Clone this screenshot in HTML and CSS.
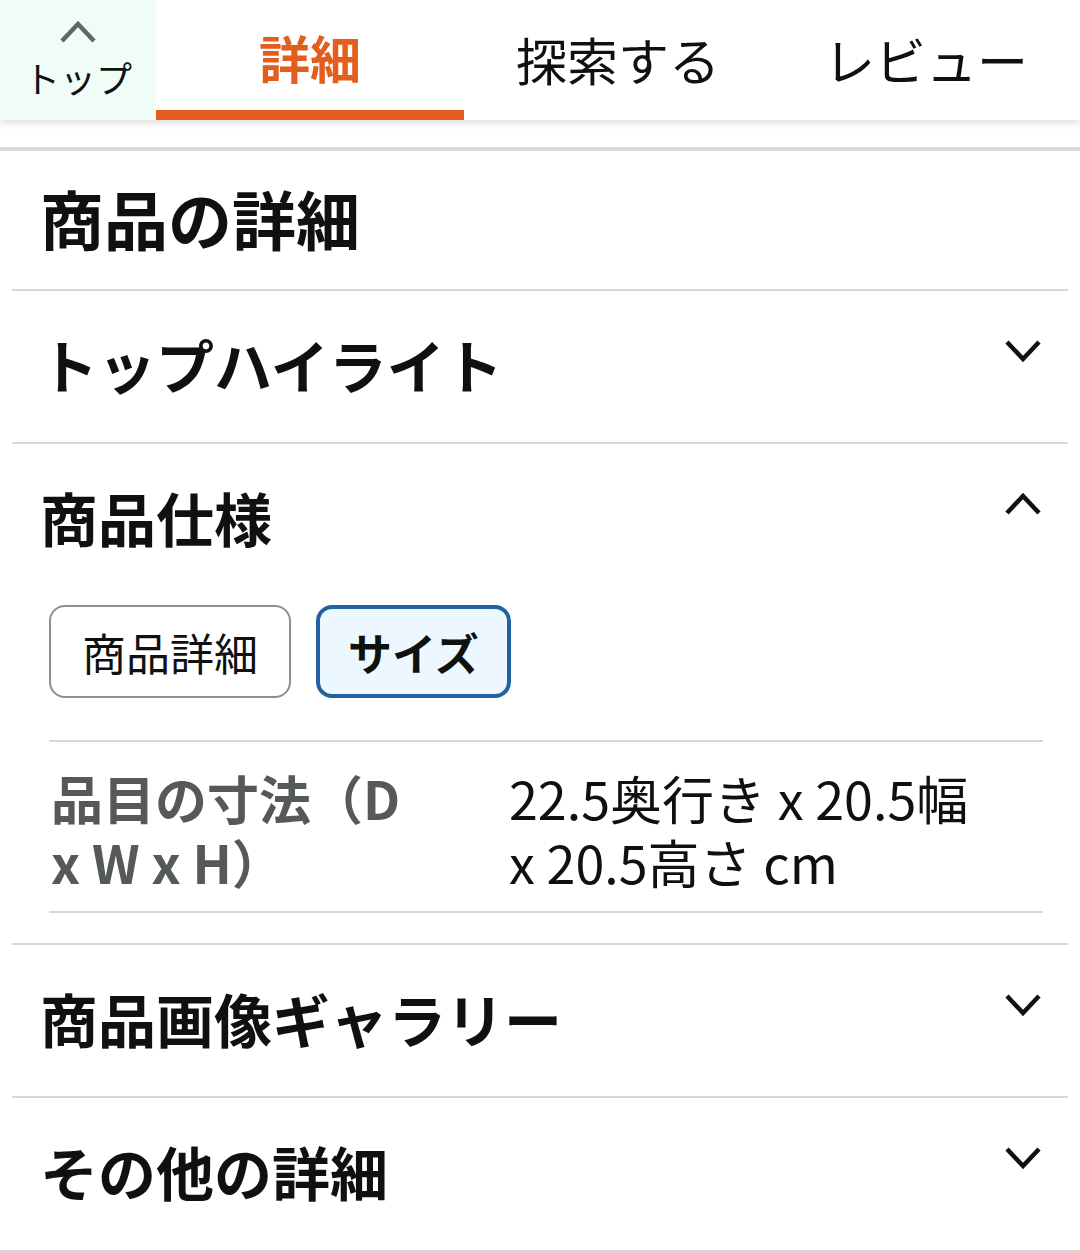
FILE: index.html
```html
<!DOCTYPE html>
<html lang="ja">
<head>
<meta charset="utf-8">
<title>商品の詳細</title>
<link rel="stylesheet" href="styles.css">
</head>
<body>
<header class="header">
  <div class="top-btn">
    <svg class="top-chev" width="38" height="26" viewBox="0 0 38 26"><polyline points="3,22 19,5 35,22" fill="none" stroke="#5d6868" stroke-width="4.5" stroke-linejoin="miter" stroke-linecap="butt"/></svg>
    <span class="top-label">トップ</span>
  </div>
  <div class="tab active">詳細</div>
  <div class="tab">探索する</div>
  <div class="tab">レビュー</div>
</header>
<div class="sep-top"></div>
<main class="content">
  <h1 class="page-title">商品の詳細</h1>
  <section class="acc">
    <div class="acc-head">
      <h2 class="acc-title">トップハイライト</h2>
      <svg class="chev" width="38" height="26" viewBox="0 0 38 26"><polyline points="3,4 19,21 35,4" fill="none" stroke="#0f1111" stroke-width="4.5"/></svg>
    </div>
  </section>
  <section class="acc">
    <div class="acc-head">
      <h2 class="acc-title">商品仕様</h2>
      <svg class="chev" width="38" height="26" viewBox="0 0 38 26"><polyline points="3,22 19,5 35,22" fill="none" stroke="#0f1111" stroke-width="4.5"/></svg>
    </div>
    <div class="acc-body">
      <div class="chips">
        <button class="chip">商品詳細</button>
        <button class="chip selected">サイズ</button>
      </div>
      <div class="spec-row">
        <div class="spec-label">品目の寸法（D x W x H）</div>
        <div class="spec-value">22.5奥行き x 20.5幅 x 20.5高さ cm</div>
      </div>
    </div>
  </section>
  <section class="acc">
    <div class="acc-head">
      <h2 class="acc-title">商品画像ギャラリー</h2>
      <svg class="chev" width="38" height="26" viewBox="0 0 38 26"><polyline points="3,4 19,21 35,4" fill="none" stroke="#0f1111" stroke-width="4.5"/></svg>
    </div>
  </section>
  <section class="acc last">
    <div class="acc-head">
      <h2 class="acc-title">その他の詳細</h2>
      <svg class="chev" width="38" height="26" viewBox="0 0 38 26"><polyline points="3,4 19,21 35,4" fill="none" stroke="#0f1111" stroke-width="4.5"/></svg>
    </div>
  </section>
</main>
<div class="sep-bottom"></div>
</body>
</html>
```
FILE: styles.css
```css
* { box-sizing: border-box; }
html, body {
  margin: 0;
  padding: 0;
  background: #ffffff;
}
body {
  font-family: "Noto Sans CJK JP", "Noto Sans", sans-serif;
  color: #0f1111;
  width: 1080px;
  height: 1252px;
  overflow: hidden;
  text-spacing-trim: space-all;
}
.header {
  position: relative;
  z-index: 2;
  display: flex;
  height: 120px;
  background: #ffffff;
  box-shadow: 0 3px 7px rgba(0, 0, 0, 0.13);
}
.top-btn {
  width: 156px;
  flex: none;
  background: #effcf8;
  display: flex;
  flex-direction: column;
  align-items: center;
  padding-top: 19px;
}
.top-chev { display: block; }
.top-label {
  font-size: 36px;
  line-height: 40px;
  margin-top: 12px;
}
.tab {
  flex: 1;
  display: flex;
  align-items: center;
  justify-content: center;
  font-size: 51px;
  line-height: 60px;
  padding-top: 8px;
  border-bottom: 10px solid transparent;
}
.tab.active {
  color: #e35e1c;
  font-weight: 700;
  border-bottom-color: #e35e1c;
  padding-top: 4px;
}
.sep-top {
  height: 31px;
  border-bottom: 4px solid #d8dcdc;
}
.content {
  margin: 0 12px;
}
.page-title {
  margin: 0;
  height: 140px;
  display: flex;
  align-items: center;
  padding: 0 28px 7px;
  font-size: 64px;
  line-height: 80px;
  font-weight: 700;
  border-bottom: 2px solid #d5d9d9;
}
.acc {
  border-bottom: 2px solid #d5d9d9;
}
.acc.last { border-bottom: none; height: 152px; }
.acc-head {
  height: 151px;
  display: flex;
  align-items: center;
  justify-content: space-between;
  padding: 0 26px 5px 28px;
}
.acc-title {
  margin: 0;
  font-size: 58px;
  line-height: 70px;
  font-weight: 700;
}
.chev {
  display: block;
  margin-bottom: 26px;
}
.acc-body {
  padding: 10px 25px 30px 37px;
}
.chips {
  display: flex;
  gap: 25px;
}
.chip {
  font-family: "Noto Sans CJK JP", "Noto Sans", sans-serif;
  font-size: 44px;
  line-height: 54px;
  height: 93px;
  padding: 0 31px;
  background: #ffffff;
  color: #0f1111;
  border: 2px solid #8d9090;
  border-radius: 16px;
}
.chip.selected {
  border: 4px solid #2162a1;
  background: #edf7ff;
  font-weight: 700;
  padding: 0 28px;
}
.spec-row {
  margin-top: 42px;
  display: grid;
  grid-template-columns: 460px 480px;
  border-top: 2px solid #d5d9d9;
  border-bottom: 2px solid #d5d9d9;
  padding: 24px 0 17px;
}
.spec-label {
  font-size: 52px;
  line-height: 64px;
  font-weight: 700;
  color: #565959;
  padding-left: 2px;
  padding-right: 82px;
  font-feature-settings: "halt" 0, "chws" 0, "palt" 0;
}
.spec-value {
  font-size: 52px;
  line-height: 64px;
  color: #0f1111;
}
.sep-bottom {
  height: 4px;
  background: #d5d9d9;
}
```
